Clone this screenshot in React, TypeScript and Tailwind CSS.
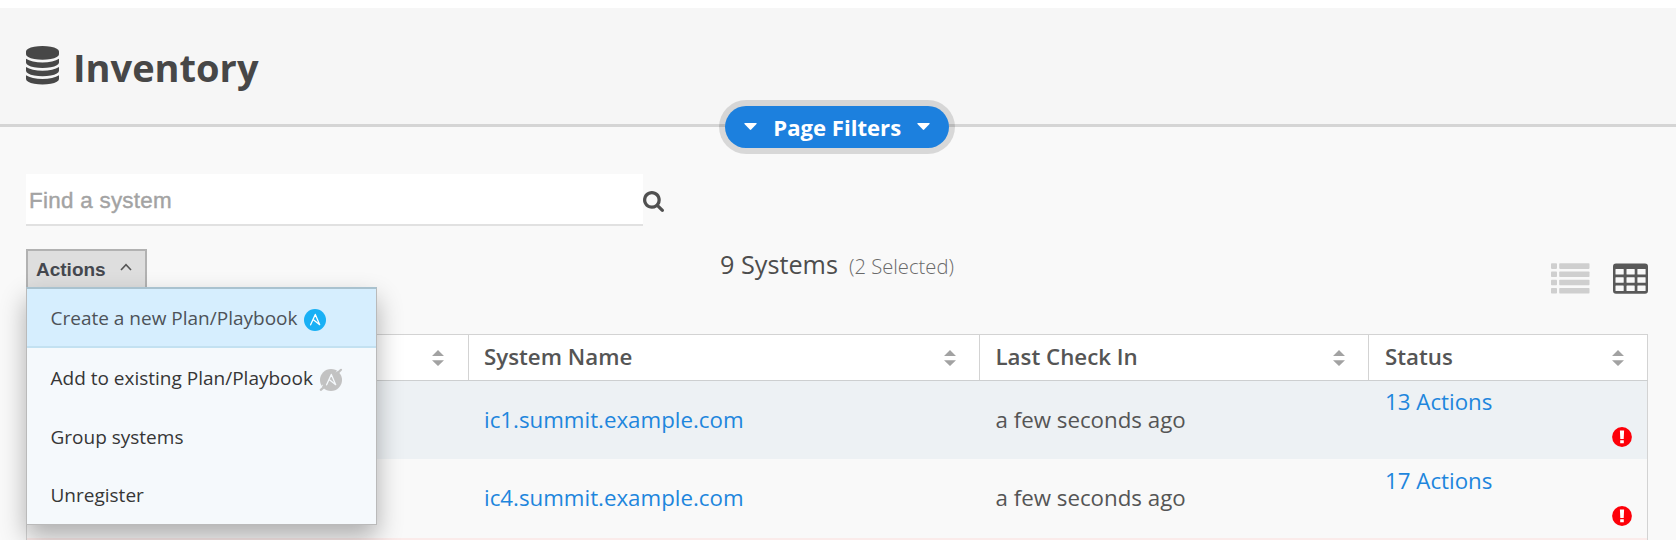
import type { ReactNode } from "react";

function DatabaseIcon() {
  return (
    <svg viewBox="0 0 1536 1792" className="mt-px h-[38.5px] w-[33px]" fill="currentColor">
      <path d="M768 768q237 0 443-43t325-127v170q0 69-103 128t-280 93.5-385 34.5-385-34.5-280-93.5-103-128v-170q119 84 325 127t443 43zm0 768q237 0 443-43t325-127v170q0 69-103 128t-280 93.5-385 34.5-385-34.5-280-93.5-103-128v-170q119 84 325 127t443 43zm0-384q237 0 443-43t325-127v170q0 69-103 128t-280 93.5-385 34.5-385-34.5-280-93.5-103-128v-170q119 84 325 127t443 43zm0-1152q208 0 385 34.5t280 93.5 103 128v128q0 69-103 128t-280 93.5-385 34.5-385-34.5-280-93.5-103-128v-128q0-69 103-128t280-93.5 385-34.5z" />
    </svg>
  );
}

function SearchIcon() {
  return (
    <svg viewBox="0 128 1664 1664" className="mt-0.5 size-[21px] text-[#505050]" fill="currentColor">
      <path d="M1152 832q0-185-131.5-316.5t-316.5-131.5-316.5 131.5-131.5 316.5 131.5 316.5 316.5 131.5 316.5-131.5 131.5-316.5zm512 832q0 52-38 90t-90 38q-54 0-90-38l-343-342q-179 124-399 124-143 0-273.5-55.5t-225-150-150-225-55.5-273.5 55.5-273.5 150-225 225-150 273.5-55.5 273.5 55.5 225 150 150 225 55.5 273.5q0 220-124 399l343 343q37 37 37 90z" />
    </svg>
  );
}

function Caret() {
  return (
    <svg viewBox="0 0 13 7" className="h-[7px] w-[13px]" fill="currentColor">
      <path d="M.8 0h11.4q.8.3.3 1L7.2 6.6q-.7.6-1.4 0L.5 1Q0 .3.8 0z" />
    </svg>
  );
}

function ListIcon() {
  return (
    <svg viewBox="0 0 39 31" className="h-[31px] w-[39px] text-[#cfcfcf]" fill="currentColor">
      {[0.3, 8.5, 16.7, 24.9].map((y) => (
        <g key={y}>
          <rect x="0" y={y} width="6" height="5.6" rx="0.8" />
          <rect x="8.2" y={y} width="30.3" height="5.6" rx="0.8" />
        </g>
      ))}
    </svg>
  );
}

function GridIcon() {
  return (
    <svg viewBox="0 0 35 31" className="h-[31px] w-[35px]">
      <rect x="0" y="0.4" width="35" height="30.4" rx="3" fill="#595959" />
      {[5.9, 14.2, 22.4].map((y) =>
        [2.5, 13.5, 24.4].map((x) => (
          <rect key={`${x}-${y}`} x={x} y={y} width="8.2" height="5.6" rx="0.5" fill="#f9f9f9" />
        )),
      )}
    </svg>
  );
}

function SortIcon() {
  return (
    <svg viewBox="0 0 12 16" className="h-4 w-3 shrink-0 text-[#a2a2a2]" fill="currentColor">
      <path d="M6 0l6 6H0zM6 16l6-5.7H0z" />
    </svg>
  );
}

function AlertIcon() {
  return (
    <svg viewBox="0 0 20 20" className="size-5">
      <circle cx="10" cy="10" r="9.9" fill="#fd0009" />
      <path d="M7.9 3.6h4.2l-.4 8.3H8.3zM8.2 13.3h3.6v2.9H8.2z" fill="#fff" />
    </svg>
  );
}

function AnsibleIcon({ disabled = false }: { disabled?: boolean }) {
  return (
    <svg viewBox="0 0 24 24" className="size-6 shrink-0">
      <circle cx="12" cy="12" r="11" fill={disabled ? "#c2c2c2" : "#19b0f5"} />
      <path
        d="M7.6 16.8L12.3 6.4l4.4 10.3-6.6-5.2"
        fill="none"
        stroke={disabled ? "#f5f9fc" : "#fff"}
        strokeWidth="1.3"
        strokeLinejoin="round"
        strokeLinecap="round"
      />
      {disabled && (
        <>
          <path d="M17.2 4.2L21.2.2M0.2 20.6L4 16.8" stroke="#f5f9fc" strokeWidth="0.8" />
          <path d="M18 5.6L22 1.8M1.8 21.8L6 18.2" stroke="#c2c2c2" strokeWidth="2.2" strokeLinecap="round" />
        </>
      )}
    </svg>
  );
}

function MenuItem({ children, active = false }: { children: ReactNode; active?: boolean }) {
  return (
    <li
      className={
        active
          ? "flex h-[59px] items-center gap-[5.5px] border-b-2 border-[#c3e1f1] bg-[#d6eefe] pt-px pl-[23.5px] text-[#4d5258]"
          : "flex h-[58.4px] items-center gap-1.5 pt-0.5 pl-[23.5px] text-[#363636]"
      }
    >
      {children}
    </li>
  );
}

function HeaderCell({ children, sortInset = "pr-[23px]" }: { children?: ReactNode; sortInset?: string }) {
  return (
    <div className={`flex items-center justify-between border-r border-[#d3d3d3] pl-[15px] ${sortInset}`}>
      <span className="pb-px">{children}</span>
      <SortIcon />
    </div>
  );
}

const systems = [
  { name: "ic1.summit.example.com", seen: "a few seconds ago", actions: "13 Actions", tone: "bg-[#edf1f4]", height: "h-[78px]", nudge: "pb-0", top: "pt-[5px]" },
  { name: "ic4.summit.example.com", seen: "a few seconds ago", actions: "17 Actions", tone: "bg-[#f9f9f9]", height: "h-[79px]", nudge: "pb-0.5", top: "pt-1.5" },
];

export default function App() {
  return (
    <div className="flex h-[542px] w-[1676px] flex-col overflow-hidden bg-white pt-2 pb-0.5 font-['Open_Sans',sans-serif]">
      <header className="relative flex h-[119px] shrink-0 justify-center border-b-[3px] border-[#d5d5d5] bg-[#f6f6f6]">
        <div className="flex h-[114px] flex-1 items-center gap-[14px] pl-[26px] text-[#474747]">
          <DatabaseIcon />
          <h1 className="pt-[3px] text-[38px] leading-[50px] font-bold">Inventory</h1>
        </div>
        <button className="absolute top-[98px] left-[725px] flex h-[41.5px] w-[223.5px] items-center justify-center gap-[16px] rounded-full bg-[#1c80de] pl-px text-white shadow-[0_0_0_6px_rgba(0,0,0,0.13)]">
          <Caret />
          <span className="text-[22.1px] leading-8 font-bold">Page Filters</span>
          <Caret />
        </button>
      </header>

      <main className="flex min-h-0 flex-1 flex-col overflow-hidden bg-[#f9f9f9] pr-7 pl-[26px]">
        <div className="mt-[47px] flex h-[52px] shrink-0 items-center">
          <div className="flex h-[52px] w-[616.5px] items-center border-b-2 border-[#e1e1e1] bg-white pt-1 pl-[3px] font-['Liberation_Sans',Arial,sans-serif] text-[22.4px] tracking-[0.28px] text-[#a3a3a3] [-webkit-text-stroke:0.4px_#a3a3a3]">
            Find a system
          </div>
          <SearchIcon />
        </div>

        <div className="mt-[23px] grid h-[85px] shrink-0 grid-cols-[1fr_auto_1fr] items-start">
          <div className="relative z-10">
            <button className="flex h-10 w-[121px] items-center gap-[14px] border-2 border-b-0 border-[#b2b2b2] bg-[#dedede] pl-[8px] font-['Liberation_Sans',Arial,sans-serif] text-[19px] font-bold text-[#45484f]">
              <span className="pt-px">Actions</span>
              <svg viewBox="0 0 12 8" className="mb-[7px] h-2 w-3">
                <path d="M1 7l5-5.4L11 7" fill="none" stroke="#555" strokeWidth="1.6" />
              </svg>
            </button>
            <ul className="absolute top-[38px] left-0 h-[237.5px] w-[351px] border border-t-2 border-[#bababa] border-t-[#a9c2cf] bg-[#f5f9fc] text-[19px] leading-7 shadow-[0_12px_24px_rgba(0,0,0,0.3)]">
              <MenuItem active>
                Create a new Plan/Playbook
                <span className="pt-1"><AnsibleIcon /></span>
              </MenuItem>
              <MenuItem>
                Add to existing Plan/Playbook
                <span className="pt-1"><AnsibleIcon disabled /></span>
              </MenuItem>
              <MenuItem>Group systems</MenuItem>
              <MenuItem>Unregister</MenuItem>
            </ul>
          </div>
          <div className="flex items-baseline gap-[11px] pt-px text-[25.2px] leading-7 text-[#4d4d4d]">
            9 Systems
            <span className="text-[20.2px] font-light text-[#6a6a6a]">(2 Selected)</span>
          </div>
          <div className="flex justify-end gap-[23.5px] pt-3.5">
            <ListIcon />
            <GridIcon />
          </div>
        </div>

        <section className="w-[1622px] border-t border-l border-[#d3d3d3] text-[22.3px] leading-8 text-[#555]">
          <div className="grid h-[46px] grid-cols-[442px_510.5px_389.5px_279px] border-b border-[#cdcfd0] bg-white font-semibold">
            <HeaderCell sortInset="pr-[24px]" />
            <HeaderCell>System Name</HeaderCell>
            <HeaderCell><span className="pl-px">Last Check In</span></HeaderCell>
            <HeaderCell><span className="pl-px">Status</span></HeaderCell>
          </div>
          {systems.map((s) => (
            <div
              key={s.name}
              className={`grid grid-cols-[442px_511px_389px_279px] items-center border-r border-[#d3d3d3] ${s.tone} ${s.height}`}
            >
              <span />
              <a className={`pl-[15px] text-[#1e86dd] ${s.nudge}`}>{s.name}</a>
              <span className={`pl-[15.5px] ${s.nudge}`}>{s.seen}</span>
              <div className={`flex h-full flex-col pr-4 pl-4 ${s.top}`}>
                <a className="text-[#1e86dd]">{s.actions}</a>
                <span className="mt-[9px] self-end"><AlertIcon /></span>
              </div>
            </div>
          ))}
          <div className="h-2 border-r border-[#d3d3d3] bg-[#fbebea]" />
        </section>
      </main>
    </div>
  );
}
